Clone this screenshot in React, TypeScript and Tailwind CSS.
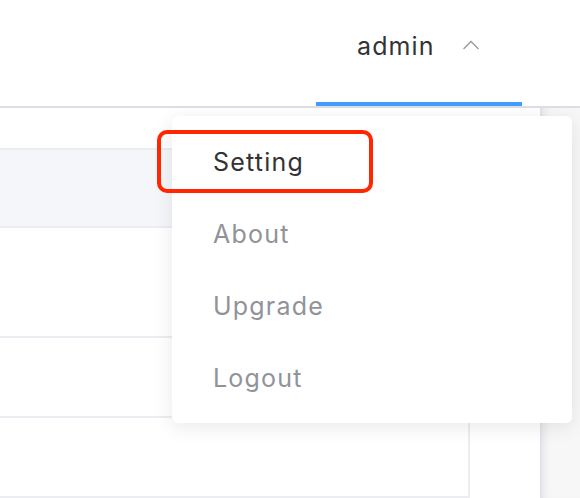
import React from "react";

export default function App() {
  const items = [
    { label: "Setting", active: true },
    { label: "About", active: false },
    { label: "Upgrade", active: false },
    { label: "Logout", active: false },
  ];
  return (
    <div
      className="relative w-[580px] h-[498px] overflow-hidden bg-white"
      style={{ fontFamily: "Inter, 'Noto Sans', 'Liberation Sans', sans-serif" }}
    >
      {/* Header */}
      <div className="h-[108px] border-b-2 border-[#dcdfe6] flex justify-end">
        <div className="w-[206px] mr-[58px] h-[106px] border-b-4 border-[#409eff] flex items-start pl-[41px] pt-[30px]">
          <span className="text-[25px] leading-[32px] tracking-[1.1px] text-[#333336]">admin</span>
          <svg
            className="ml-[27px] mt-[9px]"
            width="18"
            height="12"
            viewBox="0 0 18 12"
            fill="none"
          >
            <path d="M1.5 10 L9 2.5 L16.5 10" stroke="#9a9a9f" strokeWidth="1.4" />
          </svg>
        </div>
      </div>

      {/* Body */}
      <div className="flex h-[390px]">
        <div className="w-[542px] border-r-2 border-[#e2e3ea] flex flex-col">
          <div className="h-[40px]" />
          <div className="h-[80px] border-t-2 border-b-2 border-[#ebedf2] bg-[#f5f6fa]" />
          <div className="h-[110px] border-b-2 border-[#ebedf2]" />
          <div className="h-[80px] border-b-2 border-[#ebedf2]" />
          <div className="h-[80px] flex">
            <div className="w-[470px] border-r-2 border-b-2 border-[#ebedf2]" />
            <div className="flex-1" />
          </div>
        </div>
        <div className="flex-1 bg-[#f7f7f8] shadow-[inset_8px_0_8px_-6px_rgba(0,0,0,0.08)]" />
      </div>

      {/* Dropdown */}
      <div className="absolute left-[172px] top-[116px] w-[400px] h-[307px] bg-white rounded-[6px] shadow-[0_4px_20px_rgba(0,0,0,0.09)] pt-[11px] pb-[9px]">
        {items.map((it) => (
          <div
            key={it.label}
            className={`h-[72px] flex items-center pl-[41px] text-[25px] tracking-[1.2px] ${
              it.active ? "text-[#333336]" : "text-[#909399]"
            }`}
          >
            {it.label}
          </div>
        ))}
      </div>

      {/* Highlight annotation */}
      <div className="absolute left-[157px] top-[130px] w-[216px] h-[63px] border-4 border-[#ff2600] rounded-[10px]" />
    </div>
  );
}
